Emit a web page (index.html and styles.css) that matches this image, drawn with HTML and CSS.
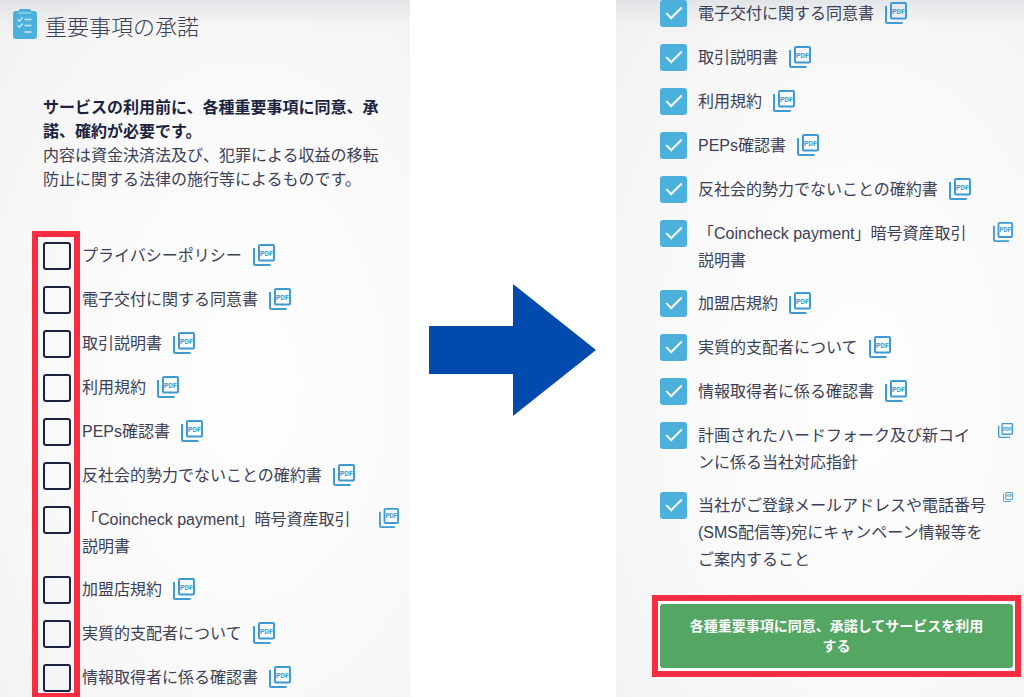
FILE: index.html
```html
<!DOCTYPE html>
<html lang="ja">
<head>
    <meta charset="UTF-8">
    <meta name="viewport" content="width=device-width, initial-scale=1.0">
    <title>重要事項の承諾</title>
    <link rel="stylesheet" href="styles.css">
</head>
<body>
    <svg class="sprite" aria-hidden="true">
        <symbol id="pdf" viewBox="0 0 22 22">
            <rect x="6" y="1" width="15" height="15.5" rx="1" fill="none" stroke="currentColor" stroke-width="2"/>
            <path d="M1 4V19.5Q1 21 2.5 21H17.5" fill="none" stroke="currentColor" stroke-width="2"/>
            <text class="pdf-text" x="13.5" y="11.5" text-anchor="middle" fill="currentColor">PDF</text>
        </symbol>
    </svg>
    <main class="steps">
        <section class="panel panel-before">
            <h1 class="title">
                <svg class="title-icon" viewBox="0 0 24 30" aria-hidden="true">
                    <rect x="0" y="2" width="24" height="28" rx="3" fill="#4bb0dc"/>
                    <path d="M5 4.500L6 1Q6.300 0 7.500 0H16.500Q17.700 0 18 1L19 4.500Z" fill="#4bb0dc"/>
                    <path d="M6 3Q6 4 7 4H17Q18 4 18 3" fill="none" stroke="#b9e0f1" stroke-width="1"/>
                    <path d="M4.500 10.500L6.500 12L9.500 8.500M4.500 16.500L6.500 18L9.500 14.500M11.500 10.500H18.500M11.500 16.500H18.500M11.500 23H18.500" fill="none" stroke="#c9e9f5" stroke-width="1.300"/>
                </svg>
                重要事項の承諾
            </h1>
            <div class="lead">
                <p class="lead-strong">サービスの利用前に、各種重要事項に同意、承<br>諾、確約が必要です。</p>
                <p>内容は資金決済法及び、犯罪による収益の移転<br>防止に関する法律の施行等によるものです。</p>
            </div>
            <ul class="terms terms-marked">
                <li class="term">
                    <input type="checkbox" class="check" id="a1">
                    <label for="a1">プライバシーポリシー</label>
                    <a href="#" class="pdf" aria-label="PDF"><svg><use href="#pdf"/></svg></a>
                </li>
                <li class="term">
                    <input type="checkbox" class="check" id="a2">
                    <label for="a2">電子交付に関する同意書</label>
                    <a href="#" class="pdf" aria-label="PDF"><svg><use href="#pdf"/></svg></a>
                </li>
                <li class="term">
                    <input type="checkbox" class="check" id="a3">
                    <label for="a3">取引説明書</label>
                    <a href="#" class="pdf" aria-label="PDF"><svg><use href="#pdf"/></svg></a>
                </li>
                <li class="term">
                    <input type="checkbox" class="check" id="a4">
                    <label for="a4">利用規約</label>
                    <a href="#" class="pdf" aria-label="PDF"><svg><use href="#pdf"/></svg></a>
                </li>
                <li class="term">
                    <input type="checkbox" class="check" id="a5">
                    <label for="a5">PEPs確認書</label>
                    <a href="#" class="pdf" aria-label="PDF"><svg><use href="#pdf"/></svg></a>
                </li>
                <li class="term">
                    <input type="checkbox" class="check" id="a6">
                    <label for="a6">反社会的勢力でないことの確約書</label>
                    <a href="#" class="pdf" aria-label="PDF"><svg><use href="#pdf"/></svg></a>
                </li>
                <li class="term">
                    <input type="checkbox" class="check" id="a7">
                    <label for="a7">「Coincheck payment」暗号資産取引<br>説明書</label>
                    <a href="#" class="pdf pdf-end" aria-label="PDF"><svg><use href="#pdf"/></svg></a>
                </li>
                <li class="term">
                    <input type="checkbox" class="check" id="a8">
                    <label for="a8">加盟店規約</label>
                    <a href="#" class="pdf" aria-label="PDF"><svg><use href="#pdf"/></svg></a>
                </li>
                <li class="term">
                    <input type="checkbox" class="check" id="a9">
                    <label for="a9">実質的支配者について</label>
                    <a href="#" class="pdf" aria-label="PDF"><svg><use href="#pdf"/></svg></a>
                </li>
                <li class="term">
                    <input type="checkbox" class="check" id="a10">
                    <label for="a10">情報取得者に係る確認書</label>
                    <a href="#" class="pdf" aria-label="PDF"><svg><use href="#pdf"/></svg></a>
                </li>
            </ul>
        </section>

        <div class="arrow">
            <svg viewBox="0 0 167 132" aria-hidden="true">
                <path d="M0 42H84V0L167 66L84 132V90H0Z" fill="#024aad"/>
            </svg>
        </div>

        <section class="panel panel-after">
            <ul class="terms">
                <li class="term">
                    <input type="checkbox" class="check" id="b2" checked>
                    <label for="b2">電子交付に関する同意書</label>
                    <a href="#" class="pdf" aria-label="PDF"><svg><use href="#pdf"/></svg></a>
                </li>
                <li class="term">
                    <input type="checkbox" class="check" id="b3" checked>
                    <label for="b3">取引説明書</label>
                    <a href="#" class="pdf" aria-label="PDF"><svg><use href="#pdf"/></svg></a>
                </li>
                <li class="term">
                    <input type="checkbox" class="check" id="b4" checked>
                    <label for="b4">利用規約</label>
                    <a href="#" class="pdf" aria-label="PDF"><svg><use href="#pdf"/></svg></a>
                </li>
                <li class="term">
                    <input type="checkbox" class="check" id="b5" checked>
                    <label for="b5">PEPs確認書</label>
                    <a href="#" class="pdf" aria-label="PDF"><svg><use href="#pdf"/></svg></a>
                </li>
                <li class="term">
                    <input type="checkbox" class="check" id="b6" checked>
                    <label for="b6">反社会的勢力でないことの確約書</label>
                    <a href="#" class="pdf" aria-label="PDF"><svg><use href="#pdf"/></svg></a>
                </li>
                <li class="term">
                    <input type="checkbox" class="check" id="b7" checked>
                    <label for="b7">「Coincheck payment」暗号資産取引<br>説明書</label>
                    <a href="#" class="pdf pdf-end" aria-label="PDF"><svg><use href="#pdf"/></svg></a>
                </li>
                <li class="term">
                    <input type="checkbox" class="check" id="b8" checked>
                    <label for="b8">加盟店規約</label>
                    <a href="#" class="pdf" aria-label="PDF"><svg><use href="#pdf"/></svg></a>
                </li>
                <li class="term">
                    <input type="checkbox" class="check" id="b9" checked>
                    <label for="b9">実質的支配者について</label>
                    <a href="#" class="pdf" aria-label="PDF"><svg><use href="#pdf"/></svg></a>
                </li>
                <li class="term">
                    <input type="checkbox" class="check" id="b10" checked>
                    <label for="b10">情報取得者に係る確認書</label>
                    <a href="#" class="pdf" aria-label="PDF"><svg><use href="#pdf"/></svg></a>
                </li>
                <li class="term">
                    <input type="checkbox" class="check" id="b11" checked>
                    <label for="b11">計画されたハードフォーク及び新コイ<br>ンに係る当社対応指針</label>
                    <a href="#" class="pdf pdf-end pdf-small" aria-label="PDF"><svg><use href="#pdf"/></svg></a>
                </li>
                <li class="term">
                    <input type="checkbox" class="check" id="b12" checked>
                    <label for="b12">当社がご登録メールアドレスや電話番号<br>(SMS配信等)宛にキャンペーン情報等を<br>ご案内すること</label>
                    <a href="#" class="pdf pdf-end pdf-tiny" aria-label="PDF"><svg><use href="#pdf"/></svg></a>
                </li>
            </ul>
            <div class="submit-frame">
                <button type="button" class="submit">各種重要事項に同意、承諾してサービスを利用<br>する</button>
            </div>
        </section>
    </main>
</body>
</html>
```
FILE: styles.css
```css
*, *::before, *::after {
    box-sizing: border-box;
}
body {
    margin: 0;
    background-color: #ffffff;
    color: #3c3f57;
    font-family: "Liberation Sans", "Noto Sans CJK JP", sans-serif;
    font-size: 16px;
    line-height: 24px;
}
.sprite {
    display: none;
}
.steps {
    display: grid;
    grid-template-columns: 410fr 206fr 408fr;
    min-height: 100vh;
}
.panel {
    background:
        linear-gradient(rgba(214, 218, 223, 0.6), rgba(240, 240, 240, 0) 28px),
        radial-gradient(ellipse at 60% 55%, #fdfdfd 0%, #fafafa 50%, #f1f1f1 100%);
}
.title {
    display: flex;
    align-items: center;
    gap: 8px;
    height: 36px;
    margin: 10px 0 0 13px;
    font-size: 22px;
    font-weight: 300;
    line-height: 36px;
}
.title-icon {
    width: 24px;
    height: 30px;
    margin-bottom: 8px;
}
.lead {
    margin: 50px 0 0 43px;
}
.lead p {
    margin: 0;
    white-space: nowrap;
}
.lead .lead-strong {
    color: #1c2340;
    font-weight: bold;
}
.terms {
    list-style: none;
    position: relative;
    display: flex;
    flex-direction: column;
    gap: 16px;
    margin: 0 11px 0 44px;
    padding: 0;
}
.terms-marked {
    margin: 50px 11px 0 43px;
    padding-bottom: 5px;
}
/* red frame around the tick boxes */
.terms-marked::after {
    content: "";
    position: absolute;
    top: -11px;
    bottom: 0;
    left: -11px;
    width: 48px;
    border: 6px solid #f92d42;
    border-bottom-width: 4px;
    pointer-events: none;
}
.term {
    display: flex;
    align-items: flex-start;
    min-height: 28px;
    line-height: 27px;
    white-space: nowrap;
}
.check {
    appearance: none;
    flex: none;
    width: 28px;
    height: 28px;
    margin: 0 11px 0 0;
    border: 2px solid #1c2340;
    border-radius: 3px;
}
.check:checked {
    width: 27px;
    height: 27px;
    border: none;
    background-color: #4bb0dc;
}
.check:checked::before {
    content: "";
    display: block;
    width: 16px;
    height: 8px;
    margin: 7px 0 0 6px;
    border-left: 2px solid #ffffff;
    border-bottom: 2px solid #ffffff;
    transform: rotate(-45deg);
}
.pdf {
    flex: none;
    width: 22px;
    height: 22px;
    margin: 2px 0 0 11px;
    color: #3d9ad5;
}
.pdf svg {
    display: block;
    width: 100%;
    height: 100%;
}
.pdf-text {
    font-family: Roboto, sans-serif;
    font-size: 7px;
    font-weight: bold;
}
.pdf-end {
    width: 20px;
    height: 20px;
    margin-left: auto;
}
.pdf-small {
    width: 15px;
    height: 15px;
    margin-top: 1px;
}
.pdf-tiny {
    width: 10px;
    height: 10px;
    margin-top: 0;
}
.arrow {
    display: flex;
    align-items: center;
    padding: 3px 20px 0 19px;
}
.arrow svg {
    display: block;
    width: 100%;
}
.submit-frame {
    margin: 22px 3px 0 36px;
    padding: 3px 2px;
    border: 6px solid #f92d42;
    background-color: #ffffff;
}
.submit {
    display: block;
    width: 100%;
    height: 64px;
    padding: 0;
    border: none;
    border-radius: 3px;
    background-color: #54a663;
    color: #ffffff;
    font-family: inherit;
    font-size: 14px;
    font-weight: bold;
    line-height: 20px;
    cursor: pointer;
}
```
